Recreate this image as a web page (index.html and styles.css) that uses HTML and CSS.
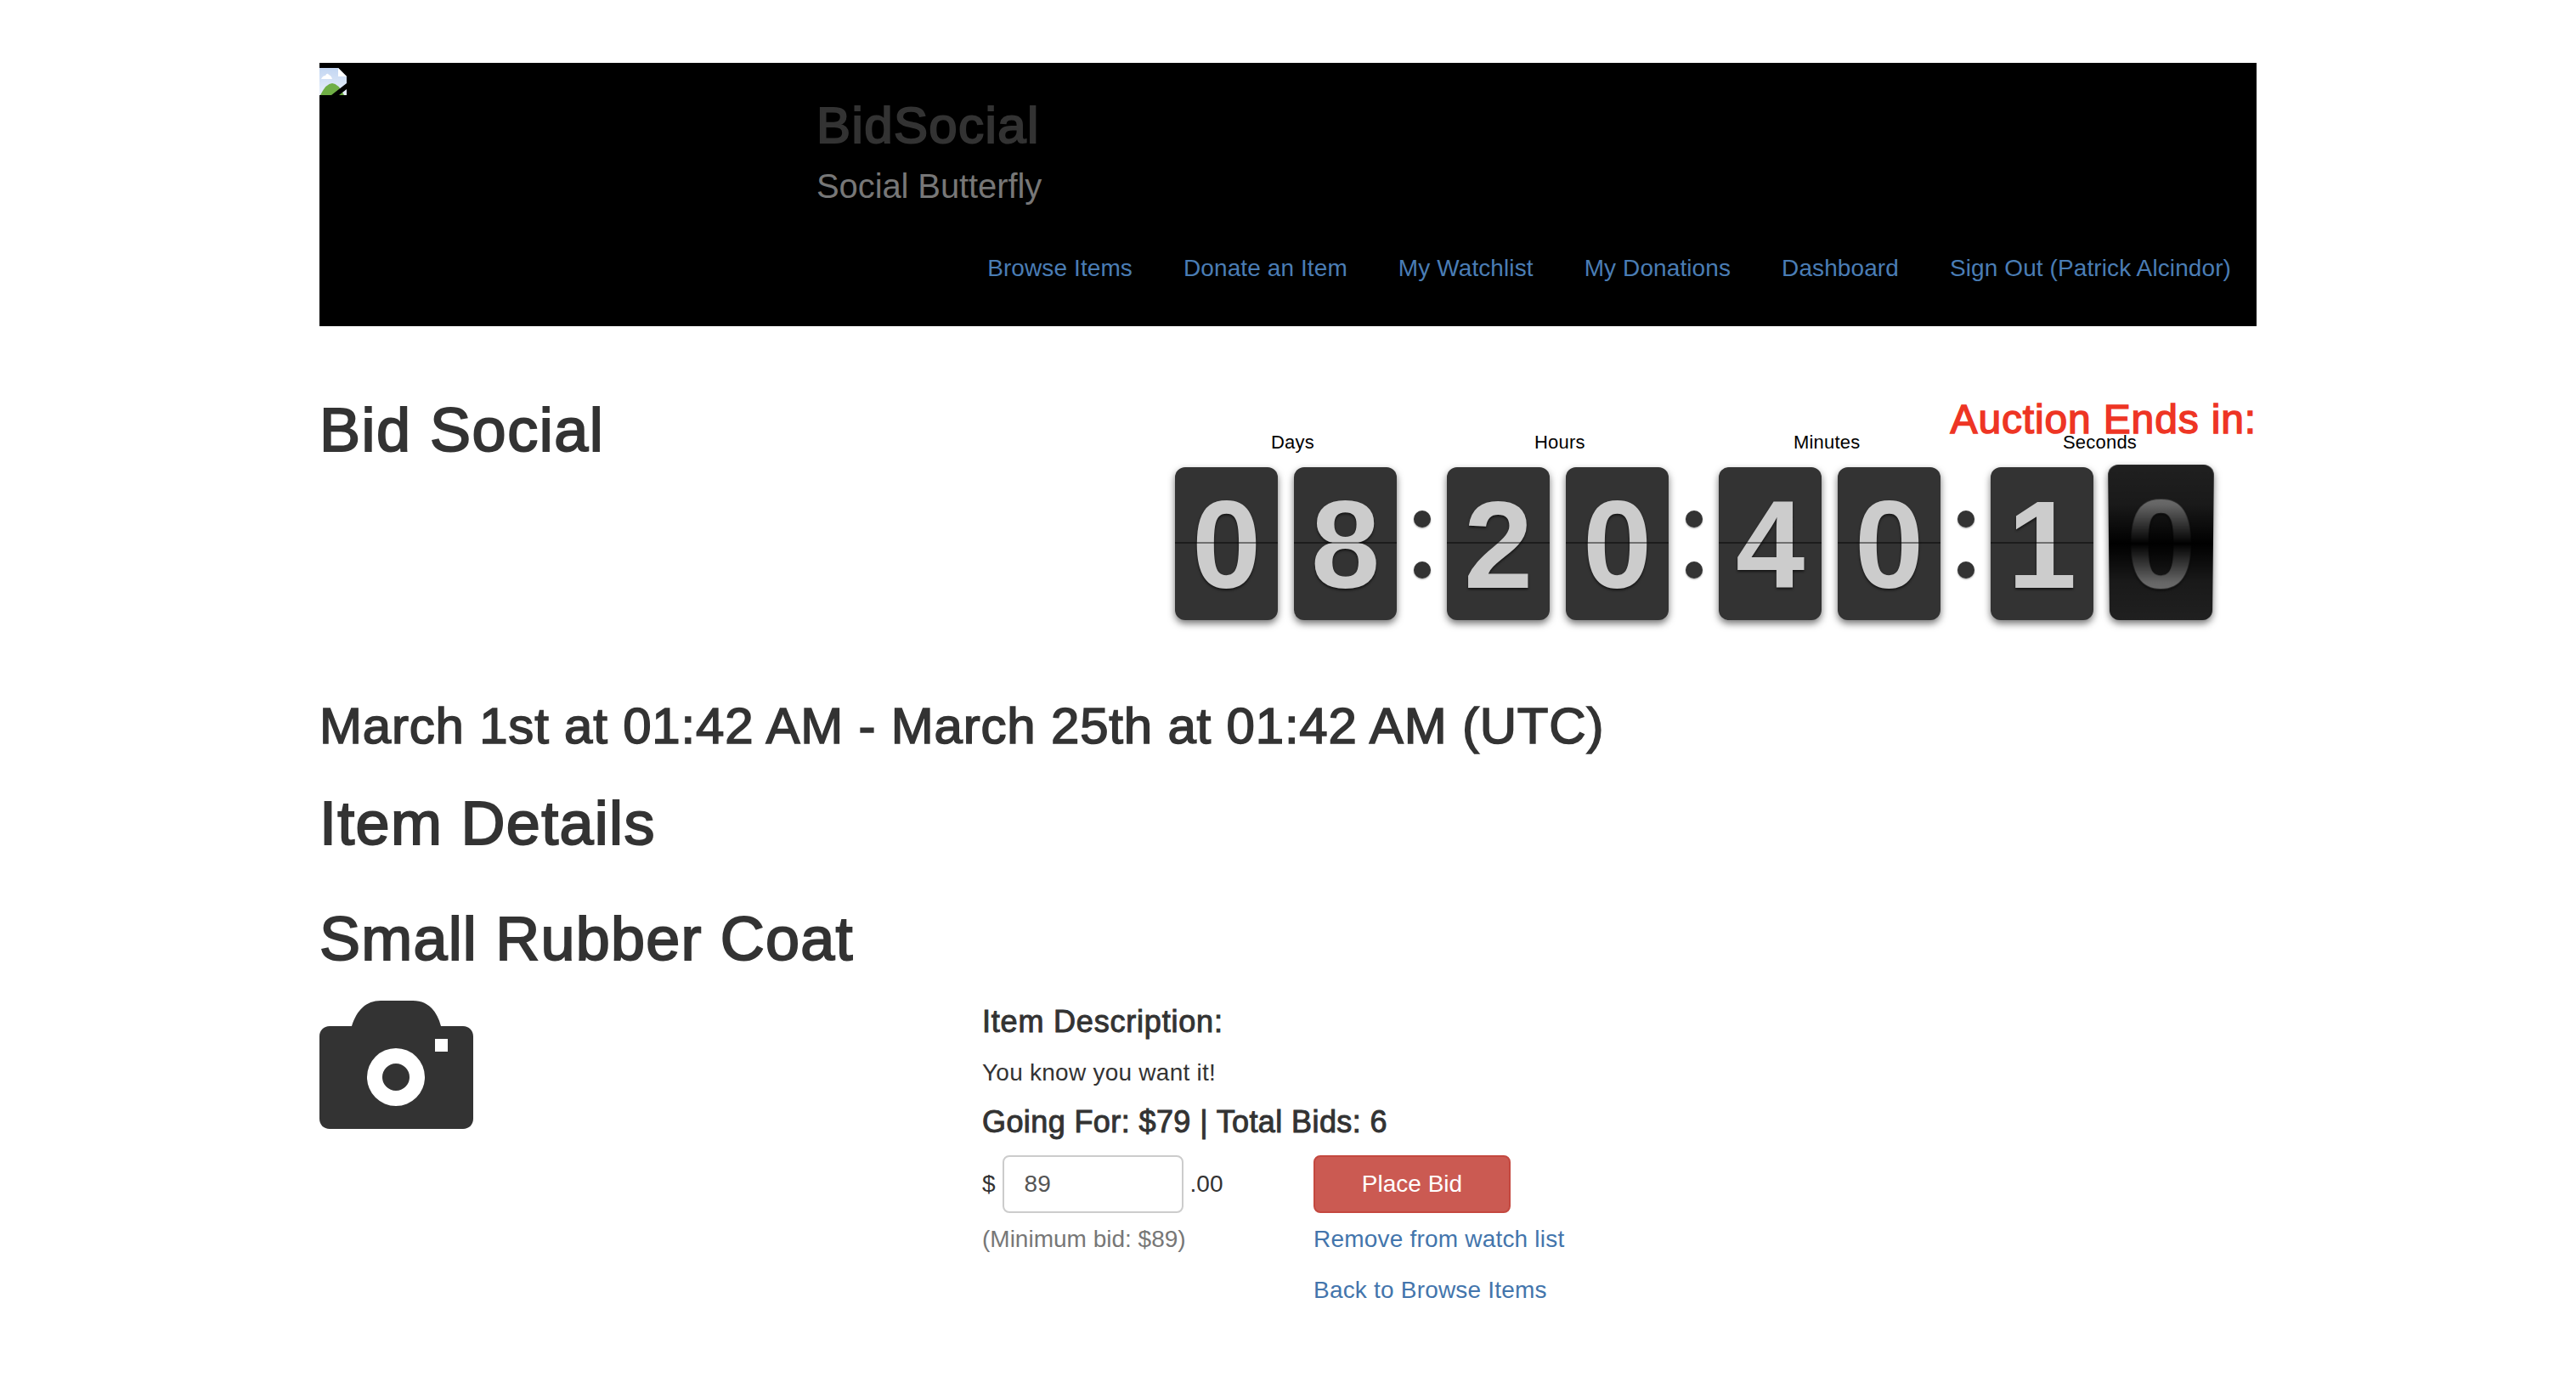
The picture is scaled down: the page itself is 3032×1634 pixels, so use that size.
FILE: index.html
```html
<!DOCTYPE html>
<html lang="en">
<head>
  <meta charset="UTF-8">
  <title>Bid Social</title>
  <link rel="stylesheet" href="styles.css">
</head>
<body>
  <div class="container">
    <div class="header">
      <div class="logo-col">
        <svg class="broken-img" viewBox="0 0 32 32" width="32" height="32">
          <defs>
            <linearGradient id="sky" x1="0" y1="0" x2="0" y2="1">
              <stop offset="0" stop-color="#c3d6f2"/>
              <stop offset="1" stop-color="#e8eff9"/>
            </linearGradient>
          </defs>
          <path d="M0 0H22L32 10V32H0Z" fill="url(#sky)"/>
          <path d="M22 0L32 10H22Z" fill="#fff"/>
          <path d="M2 13Q4 9 7 9Q9 5 11 8Q14 9 15 13Z" fill="#fff"/>
          <path d="M1 32Q8 18 15 18Q22 18 29 32Z" fill="#6fae45"/>
          <path d="M14 32L32 18V25L23 32Z" fill="#000"/>
        </svg>
      </div>
      <div class="brand-col">
        <h2 class="brand">BidSocial</h2>
        <h3 class="tagline">Social Butterfly</h3>
        <div class="nav">
          <a href="#">Browse Items</a>
          <a href="#">Donate an Item</a>
          <a href="#">My Watchlist</a>
          <a href="#">My Donations</a>
          <a href="#">Dashboard</a>
          <a href="#">Sign Out (Patrick Alcindor)</a>
        </div>
      </div>
    </div>

    <div class="title-row">
      <h1 class="page-title">Bid Social</h1>
      <div class="timer">
        <div class="ends-in">Auction Ends in:</div>
        <div class="clock">
          <div class="group">
            <div class="label label-days">Days</div>
            <div class="cards">
              <div class="card"><span>0</span></div>
              <div class="card"><span>8</span></div>
            </div>
          </div>
          <div class="dots"><i></i><i></i></div>
          <div class="group">
            <div class="label label-hours">Hours</div>
            <div class="cards">
              <div class="card"><span>2</span></div>
              <div class="card"><span>0</span></div>
            </div>
          </div>
          <div class="dots"><i></i><i></i></div>
          <div class="group">
            <div class="label label-minutes">Minutes</div>
            <div class="cards">
              <div class="card"><span>4</span></div>
              <div class="card"><span>0</span></div>
            </div>
          </div>
          <div class="dots"><i></i><i></i></div>
          <div class="group">
            <div class="label label-seconds">Seconds</div>
            <div class="cards">
              <div class="card"><span>1</span></div>
              <div class="card flipping"><span>0</span></div>
            </div>
          </div>
        </div>
      </div>
    </div>

    <h3 class="dates">March 1st at 01:42 AM - March 25th at 01:42 AM (UTC)</h3>
    <h2 class="section-title">Item Details</h2>
    <h2 class="item-name">Small Rubber Coat</h2>

    <div class="item">
      <div class="item-photo">
        <svg viewBox="0 0 181 151" width="181" height="151">
          <path fill="#333" fill-rule="evenodd" d="M12 30H38C44 11 55 0 72 0H110C127 0 138 11 143 30H169C176 30 181 35 181 42V139C181 146 176 151 169 151H12C5 151 0 146 0 139V42C0 35 5 30 12 30ZM136 45V60H151V45ZM90 56A34 34 0 1 0 90 124A34 34 0 1 0 90 56ZM90 74A16 16 0 1 1 90 106A16 16 0 1 1 90 74Z"/>
        </svg>
      </div>
      <div class="item-info">
        <h4 class="info-head">Item Description:</h4>
        <p class="info-text">You know you want it!</p>
        <h4 class="going-for">Going For: $79 | Total Bids: 6</h4>
        <div class="bid-grid">
          <div class="bid-input">
            <span>$</span>
            <input type="text" value="89">
            <span>.00</span>
          </div>
          <button class="btn-bid">Place Bid</button>
          <div class="min-bid">(Minimum bid: $89)</div>
          <a class="link" href="#">Remove from watch list</a>
          <div></div>
          <a class="link link-back" href="#">Back to Browse Items</a>
        </div>
      </div>
    </div>
  </div>
</body>
</html>
```

FILE: styles.css
```css
* {
  box-sizing: border-box;
}
body {
  margin: 0;
  background-color: #fff;
  color: #333;
  font-family: "Liberation Sans", Arial, sans-serif;
  font-size: 28px;
  line-height: 40px;
}
h1, h2, h3, h4, p {
  margin: 0;
}
a {
  color: #4375ac;
  text-decoration: none;
  letter-spacing: 0.2px;
}
.container {
  width: 2280px;
  margin: 0 auto;
  padding-top: 74px;
}

/* header */
.header {
  display: flex;
  height: 310px;
  background-color: #000;
}
.logo-col {
  width: 585px;
  padding-top: 6px;
}
.broken-img {
  display: block;
}
.brand-col {
  flex: 1;
  padding-right: 30px;
}
.brand {
  margin-top: 41px;
  color: #333;
  font-size: 60px;
  line-height: 66px;
  font-weight: 400;
  letter-spacing: 1.4px;
  -webkit-text-stroke: 2px #333;
}
.tagline {
  margin-top: 16px;
  color: #777;
  font-size: 40px;
  line-height: 44px;
  font-weight: 400;
  letter-spacing: -0.1px;
}
.nav {
  display: flex;
  justify-content: flex-end;
  gap: 60px;
  margin-top: 55px;
}
.nav a {
  color: #4a7db5;
  letter-spacing: 0.1px;
}

/* title and clock */
.title-row {
  display: flex;
  justify-content: space-between;
}
.page-title {
  margin-top: 82px;
  font-size: 72px;
  line-height: 80px;
  font-weight: 400;
  letter-spacing: 1.5px;
  -webkit-text-stroke: 2px #333;
}
.timer {
  width: 1273px;
  padding-top: 84px;
}
.ends-in {
  margin-bottom: -12px;
  color: #ee3524;
  font-size: 48px;
  line-height: 52px;
  font-weight: 400;
  letter-spacing: 0.85px;
  text-align: right;
  -webkit-text-stroke: 1.5px #ee3524;
}
.clock {
  display: flex;
  gap: 19.5px;
}
.group {
  width: 261px;
}
.label {
  color: #000;
  font-size: 22px;
  line-height: 26px;
  letter-spacing: 0.2px;
  margin-bottom: 16px;
}
.label-days {
  margin-left: 113px;
}
.label-hours {
  margin-left: 103px;
}
.label-minutes {
  margin-left: 88px;
}
.label-seconds {
  margin-left: 85px;
}
.cards {
  display: flex;
  gap: 19px;
}
.card {
  position: relative;
  width: 121px;
  height: 180px;
  border-radius: 12px;
  background-color: #333;
  box-shadow: 0 4px 8px rgba(0, 0, 0, 0.55);
  color: #ccc;
  font-size: 146px;
  line-height: 183px;
  font-weight: 700;
  text-align: center;
  text-shadow: 0 2px 3px rgba(0, 0, 0, 0.6);
}
.card::before {
  content: "";
  position: absolute;
  left: 0;
  right: 0;
  top: 88px;
  height: 2px;
  background-color: rgba(0, 0, 0, 0.45);
}
.flipping {
  transform: perspective(1000px) rotateX(-10deg);
  transform-origin: bottom;
}
.flipping::before {
  top: 0;
  height: 100%;
  border-radius: 12px;
  background: linear-gradient(to bottom, rgba(0, 0, 0, 0.38) 0, rgba(0, 0, 0, 0.5) 25%, #000 50%, rgba(0, 0, 0, 0.5) 75%, rgba(0, 0, 0, 0.38) 100%);
}
.dots {
  display: flex;
  flex-direction: column;
  gap: 40px;
  width: 20px;
  margin-top: 93px;
}
.dots i {
  display: block;
  width: 20px;
  height: 20px;
  border-radius: 50%;
  background-color: #333;
  box-shadow: 0 1px 2px rgba(0, 0, 0, 0.4);
}

/* headings */
.dates {
  margin-top: 92px;
  font-size: 60px;
  line-height: 66px;
  font-weight: 400;
  letter-spacing: 0.8px;
  -webkit-text-stroke: 1.6px #333;
}
.section-title {
  margin-top: 41px;
  font-size: 72px;
  line-height: 80px;
  font-weight: 400;
  letter-spacing: 1.3px;
  -webkit-text-stroke: 2px #333;
}
.item-name {
  margin-top: 56px;
  font-size: 72px;
  line-height: 80px;
  font-weight: 400;
  letter-spacing: 1.2px;
  -webkit-text-stroke: 2px #333;
}

/* item */
.item {
  display: flex;
  margin-top: 33px;
}
.item-photo {
  width: 780px;
}
.info-head {
  margin-top: 5px;
  font-size: 36px;
  line-height: 40px;
  font-weight: 400;
  letter-spacing: 0.8px;
  -webkit-text-stroke: 1px #333;
}
.info-text {
  margin-top: 20px;
  letter-spacing: 0.25px;
}
.going-for {
  margin-top: 18px;
  font-size: 36px;
  line-height: 40px;
  font-weight: 400;
  letter-spacing: 0.4px;
  -webkit-text-stroke: 1px #333;
}
.bid-grid {
  display: grid;
  grid-template-columns: 390px auto;
  justify-content: start;
  margin-top: 19px;
}
.bid-input {
  display: flex;
  align-items: center;
  gap: 8px;
}
.bid-input input {
  width: 213px;
  height: 68px;
  padding: 0 24px;
  border: 2px solid #ccc;
  border-radius: 8px;
  color: #555;
  font-family: inherit;
  font-size: 28px;
}
.btn-bid {
  width: 232px;
  height: 68px;
  background-color: #cb5a52;
  border: 2px solid #c4483f;
  border-radius: 8px;
  color: #fff;
  font-family: inherit;
  font-size: 28px;
}
.min-bid {
  margin-top: 11px;
  color: #777;
}
.link {
  margin-top: 11px;
}
.link-back {
  margin-top: 20px;
}
```
